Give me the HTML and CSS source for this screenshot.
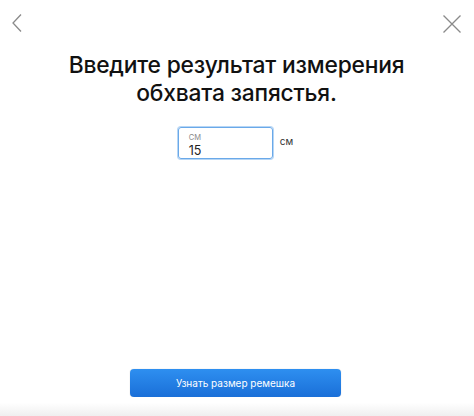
FILE: index.html
```html
<!DOCTYPE html>
<html lang="ru">
<head>
<meta charset="utf-8">
<link rel="stylesheet" href="styles.css">
</head>
<body>
<div class="page">
  <header class="topbar">
    <button class="icon-btn back" aria-label="Назад">
      <svg width="12" height="20" viewBox="0 0 12 20"><path d="M10 1.5 L2 10 L10 18.5" fill="none" stroke="#8a8a8a" stroke-width="1.3"/></svg>
    </button>
    <button class="icon-btn close" aria-label="Закрыть">
      <svg width="20" height="20" viewBox="0 0 20 20"><path d="M1.5 1.5 L18.5 18.5 M18.5 1.5 L1.5 18.5" fill="none" stroke="#8a8a8a" stroke-width="1.3"/></svg>
    </button>
  </header>
  <h1 class="title">Введите результат измерения<br>обхвата запястья.</h1>
  <div class="field-row">
    <label class="field">
      <span class="field-label">СМ</span>
      <span class="field-value">15</span>
    </label>
    <span class="unit">см</span>
  </div>
  <div class="spacer"></div>
  <div class="actions">
    <button class="primary">Узнать размер ремешка</button>
  </div>
  <div class="footer-fade"></div>
</div>
</body>
</html>
```
FILE: styles.css
```css
* { box-sizing: border-box; }
html, body { margin: 0; padding: 0; background: #fff; }
body { font-family: Inter, "Noto Sans", "Liberation Sans", sans-serif; color: #1d1d1f; }
.page { width: 474px; height: 416px; display: flex; flex-direction: column; overflow: hidden; }
.topbar { display: flex; justify-content: space-between; padding: 13px 12px 0 11px; height: 40px; }
.icon-btn { background: none; border: 0; padding: 0; margin: 0; height: 20px; display: flex; }
.close { margin-top: 1px; }
.title { margin: 11px 0 0; padding-right: 1px; font-size: 22.8px; font-weight: 500; line-height: 28px; text-align: center; letter-spacing: -0.2px; color: #111; }
.field-row { display: flex; justify-content: center; align-items: center; margin-top: 20px; padding-right: 3px; gap: 7px; }
.field { width: 95px; height: 32px; border: 1px solid #6aa9e9; border-radius: 3px; box-shadow: 0 0 0 1px #b7d6f5; display: flex; flex-direction: column; padding: 5px 9px 0 10px; }
.field-label { font-size: 7.5px; color: #888; line-height: 9px; }
.field-value { font-size: 12.5px; color: #222; line-height: 15px; margin-top: 1px; }
.unit { font-size: 10px; color: #333; margin-top: -4px; }
.spacer { flex: 1; }
.actions { display: flex; justify-content: center; padding-right: 3px; }
.primary { width: 211px; height: 28px; border: 0; border-radius: 4px; background: linear-gradient(#2e8ff0, #1a6fd8); color: #fff; font-family: inherit; font-size: 10px; box-shadow: 0 0 1px rgba(0,0,0,0.3); }
.footer-fade { height: 19px; margin-top: 0; background: linear-gradient(#fff, #fff 30%, #efefef); }
```
